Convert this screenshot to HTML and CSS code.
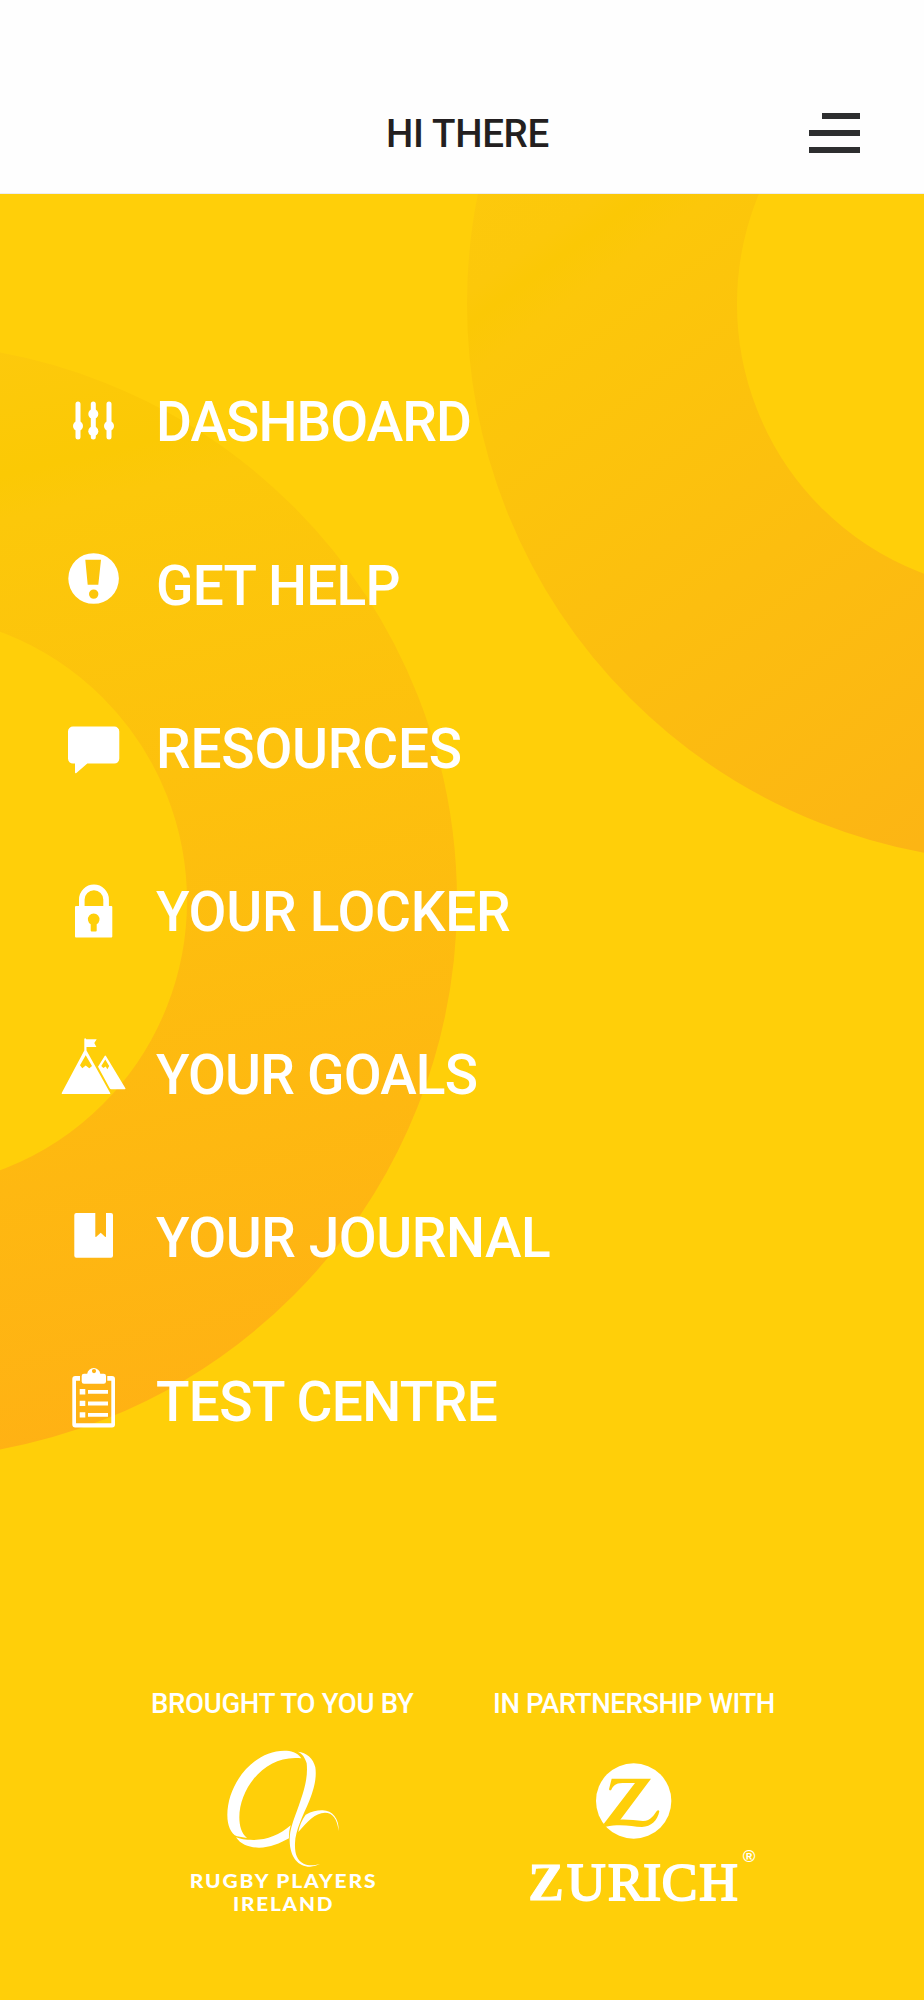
FILE: index.html
```html
<!DOCTYPE html>
<html lang="en">
<head>
<meta charset="utf-8">
<title>Menu</title>
<link rel="stylesheet" href="styles.css">
</head>
<body>
<div class="screen">
  <header class="header">
    <h1 class="title">HI THERE</h1>
    <button class="burger" aria-label="Menu"><span class="bar bar-short"></span><span class="bar"></span><span class="bar"></span></button>
  </header>
  <main class="panel">
    <svg class="rings" viewBox="0 194 924 1806" aria-hidden="true">
      <defs>
        <linearGradient id="left" gradientUnits="userSpaceOnUse" x1="-10" y1="340" x2="240" y2="1430">
          <stop offset="0" stop-color="#fdc90d"/><stop offset=".12" stop-color="#fbc904"/><stop offset=".16" stop-color="#fcc80a"/><stop offset="1" stop-color="#ffb114"/>
        </linearGradient>
        <linearGradient id="right" gradientUnits="userSpaceOnUse" x1="450" y1="150" x2="945" y2="825">
          <stop offset="0" stop-color="#fdc90e"/><stop offset=".15" stop-color="#fcc80a"/><stop offset=".18" stop-color="#fbc805"/><stop offset=".23" stop-color="#fcc70a"/><stop offset="1" stop-color="#fcb514"/>
        </linearGradient>
      </defs>
      <circle cx="-100.5" cy="901" r="422.5" fill="none" stroke="url(#left)" stroke-width="270"/>
      <circle cx="1025" cy="304" r="423" fill="none" stroke="url(#right)" stroke-width="270"/>
    </svg>
    <nav class="menu">
      <a class="item">
        <svg class="icon" viewBox="0 0 72 72"><path d="M20 19v33M35.3 19v33M51 19v33" stroke="#fff" stroke-width="5" stroke-linecap="round"/><circle cx="20" cy="41" r="5"/><circle cx="35.3" cy="29" r="5"/><circle cx="35.3" cy="46.3" r="5"/><circle cx="51" cy="41" r="5"/></svg>
        <span class="label dashboard">DASHBOARD</span>
      </a>
      <a class="item">
        <svg class="icon" viewBox="0 0 72 72"><path fill-rule="evenodd" d="M10.3 30.5a25.3 25.3 0 1 0 50.6 0a25.3 25.3 0 1 0-50.6 0zM27.3 11.8H43L40.3 36.8H29.7zM31 46.1a4.7 4.7 0 1 0 9.4 0a4.7 4.7 0 1 0-9.4 0z"/></svg>
        <span class="label help">GET HELP</span>
      </a>
      <a class="item">
        <svg class="icon" viewBox="0 0 72 72"><path d="M15 15.6H56.3a5 5 0 0 1 5 5V47.6a5 5 0 0 1-5 5H29.3L18.4 62Q17 62.8 17 61V52.6H15a5 5 0 0 1-5-5V20.6a5 5 0 0 1 5-5z"/></svg>
        <span class="label resources">RESOURCES</span>
      </a>
      <a class="item">
        <svg class="icon" viewBox="0 0 72 72"><path d="M23.8 32V24.5a12.1 12.1 0 0 1 24.3 0V32" fill="none" stroke="#fff" stroke-width="5.6"/><path fill-rule="evenodd" d="M18 31.1H53.3q1 0 1 1V61.4q0 1-1 1H18q-1 0-1-1V32.1q0-1 1-1zM32.7 49.2V55.4q0 1 1 1H37.7q1 0 1-1V49.2A5.8 5.8 0 1 0 32.7 49.2z"/></svg>
        <span class="label locker">YOUR LOCKER</span>
      </a>
      <a class="item">
        <svg class="icon" viewBox="0 0 72 72"><path d="M26.3.8q1-1.5 2 .4H38.7L36.3 4.9L38.4 8.9H28.5V12.6L52.3 55.2q.2.9-.8.9H4.5q-1.2 0-.8-1L26.3 12.6z"/><path class="snow" d="M27.7 17.2L22 27.3L24.3 30.2L27.7 27.5L31.3 30.2L34 28z"/><path fill-rule="evenodd" d="M46.5 18.3q.8-1.6 1.6 0L67.4 50.2q.4 1-.7 1H53.3q-1.2 0-1.6-.9L40 28.8zM47.3 21.5L43.3 28L45.3 30L47.8 28.5L49.3 31.2L51.2 28z"/></svg>
        <span class="label goals">YOUR GOALS</span>
      </a>
      <a class="item">
        <svg class="icon" viewBox="0 0 72 72"><path d="M18.3 12.1H37.3V35.2q0 1.3 1 .5L42.7 31.7L47 35.7q1 .8 1-.5V12.1H53q2 0 2 2V54.7q0 2-2 2H18.3q-2 0-2-2V14.1q0-2 2-2z"/></svg>
        <span class="label journal">YOUR JOURNAL</span>
      </a>
      <a class="item">
        <svg class="icon" viewBox="0 0 72 72"><path d="M22 12.1V16.8H18V59.2H53.3V16.8H49.3V12.1H54q3 0 3 3V60.5q0 3-3 3H17.3q-3 0-3-3V15.1q0-3 3-3z"/><path fill-rule="evenodd" d="M26 9.8H29.2A6.6 6.6 0 0 1 42.3 9.8H45.7q2.3 0 2.3 2.3V17.5q0 2.3-2.3 2.3H26q-2.3 0-2.3-2.3V12.1q0-2.3 2.3-2.3zM33.9 7.1a2.1 2.1 0 1 0 4.2 0a2.1 2.1 0 1 0-4.2 0z"/><path d="M21.7 25.1h5.6v5.4h-5.6zM21.7 36.7h5.6v5.2h-5.6zM21.7 48.2h5.6v5.4h-5.6zM30 26.1h20v3.7h-20zM30 37.6h20v3.8h-20zM30 49.1h20v3.7h-20z"/></svg>
        <span class="label test">TEST CENTRE</span>
      </a>
    </nav>
    <footer class="partners">
      <section class="partner players">
        <h2 class="caption brought">BROUGHT TO YOU BY</h2>
        <svg class="logo" viewBox="120 120 630 600">
          <path d="M484 235C472 216 452 212 433 212C340 212 262 312 262 405C262 437 273 462 291 469L321 474C304 460 298 437 298 412C298 325 375 222 484 235z"/>
          <path d="M288 472C303 495 330 503 357 503C390 503 420 490 447 475Q446 455 452 436C420 465 380 480 340 480C315 480 300 477 288 472z"/>
          <path d="M473 215C487 220 495 233 500 250C504 290 495 325 476 378C461 420 448 450 449 482C450 532 475 560 510 560Q528 558 540 552C520 557 505 557 491 551C470 541 464 520 465 490C466 450 490 405 508 362C528 312 529 283 526 262C520 235 500 218 473 215z"/>
          <path d="M497 404C515 394 530 391 545 391C575 389 598 415 596 453C592 415 577 398 555 398C525 398 500 427 475 456C478 437 486 420 497 404z"/>
          <text class="rpi" x="149" y="624" textLength="563" lengthAdjust="spacingAndGlyphs">RUGBY PLAYERS</text>
          <text class="rpi" x="279" y="694" textLength="304" lengthAdjust="spacingAndGlyphs">IRELAND</text>
        </svg>
      </section>
      <section class="partner zurich">
        <h2 class="caption with">IN PARTNERSHIP WITH</h2>
        <svg class="logo" viewBox="120 120 720 600">
          <circle cx="461" cy="363" r="113"/>
          <path class="mark" d="M395 296H513L421 419C445 418 467 422 489 423C513 422 522 404 531 392Q536 388 538 394C533 421 513 441 486 441C456 440 426 430 377 440L371 432L465 309H427C406 309 400 318 394 329Q389 334 387 328z"/>
          <text class="zname" x="145 261 384 490 545 658" y="661"><tspan class="initial">Z</tspan>URICH</text>
          <text class="reg" x="788" y="546" textLength="38" lengthAdjust="spacingAndGlyphs">®</text>
        </svg>
      </section>
    </footer>
  </main>
</div>
</body>
</html>
```

FILE: styles.css
```css
* { box-sizing: border-box; }
body { margin: 0; background: #fff; font-family: Roboto, "Liberation Sans", sans-serif; }
.screen { width: 924px; height: 2000px; display: flex; flex-direction: column; overflow: hidden; }
.header { height: 194px; flex: none; display: grid; grid-template-columns: 386px 1fr 52px 64px; padding-top: 110px; border-bottom: 1px solid #edeef0; background: #fefefe; align-items: start; }
.title { grid-column: 2; margin: 0; font-size: 38.5px; line-height: 48px; font-weight: 500; letter-spacing: -.3px; color: #231f20; white-space: nowrap; }
.burger { display: flex; flex-direction: column; align-items: flex-end; gap: 11px; width: 52px; padding: 3px 0 0; border: 0; background: none; }
.bar { width: 51px; height: 6px; background: #2d2e2f; }
.bar-short { width: 38px; }
.panel { position: relative; flex: 1; background: #ffcf09; display: flex; flex-direction: column; }
.rings { position: absolute; left: 0; top: 0; width: 924px; height: 1806px; }
.menu { position: relative; padding: 145.4px 0 0 58px; display: flex; flex-direction: column; }
.item { display: flex; align-items: center; height: 163.2px; gap: 26px; }
.icon { width: 72px; height: 72px; flex: none; fill: #fff; overflow: visible; }
.snow { fill: #ffcf09; }
.mark { fill: #ffcf09; }
.label { padding-top: 3px; color: #fff; font-size: 55px; line-height: 64px; font-weight: 500; white-space: nowrap; }
.dashboard { letter-spacing: -.9px; }
.help { letter-spacing: -.75px; }
.resources { letter-spacing: -.2px; }
.locker { letter-spacing: -.25px; }
.goals { letter-spacing: -.8px; }
.journal { letter-spacing: -.45px; }
.test { letter-spacing: -.65px; }
.partners { position: relative; display: flex; padding-top: 206.4px; }
.partner { display: flex; flex-direction: column; align-items: flex-start; }
.players { width: 342px; margin-left: 151px; }
.caption { margin: 0; color: #fff; font-size: 27.5px; line-height: 32px; font-weight: 500; white-space: nowrap; }
.brought { letter-spacing: -.3px; }
.with { letter-spacing: -.4px; }
.logo { fill: #fff; height: 200px; overflow: visible; }
.players .logo { width: 210px; margin-left: 29px; }
.zurich .logo { width: 240px; margin-left: 27px; }
.rpi { font: 900 57px Lato, sans-serif; letter-spacing: 5px; }
.zname { font: 400 160px "Liberation Serif", serif; stroke: #fff; stroke-width: 6px; }
.initial { font-weight: 700; stroke-width: 3px; }
.reg { font: 700 52px "Liberation Sans", sans-serif; }
```
